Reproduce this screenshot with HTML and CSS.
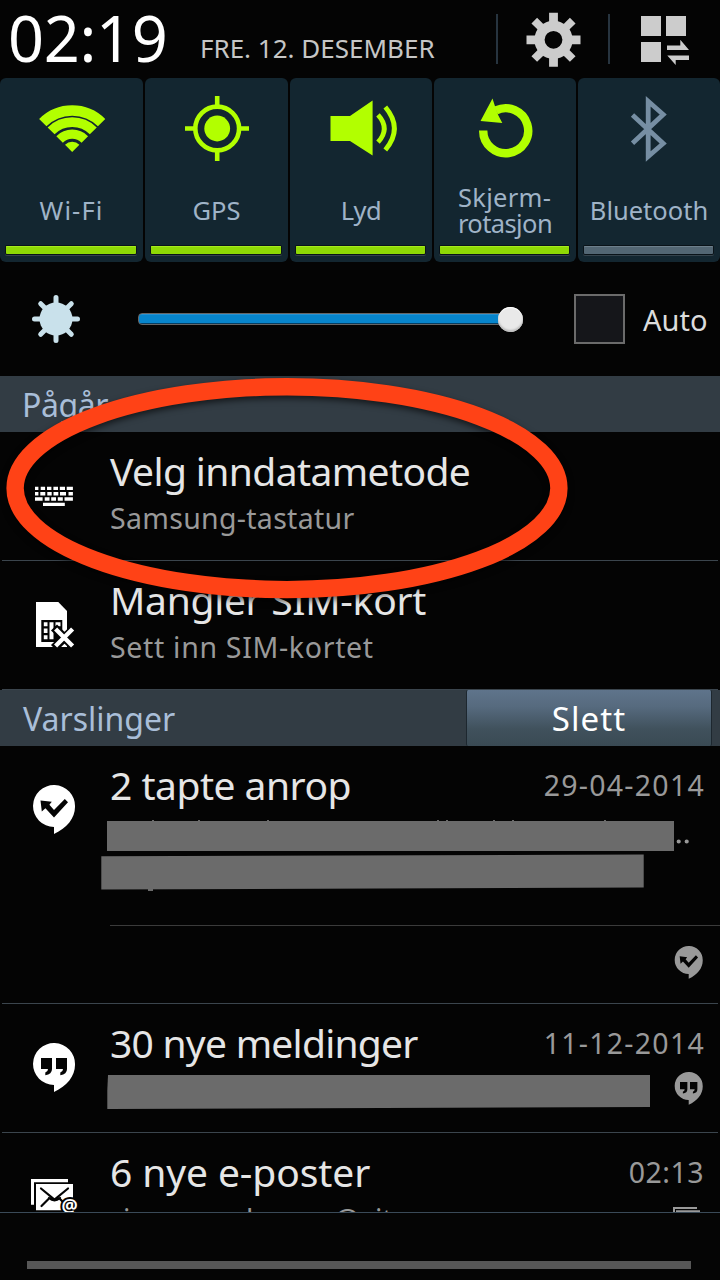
FILE: index.html
```html
<!DOCTYPE html>
<html lang="nb">
<head>
<meta charset="utf-8">
<title>Varslinger</title>
<link rel="stylesheet" href="styles.css">
</head>
<body>
<svg width="0" height="0" class="defs">
  <symbol id="missed" viewBox="-22 -22 44 50">
    <path fill="currentColor" d="M0 20V27C13 21 21 11 21 0A21 21 0 1 0 0 20Z"/>
    <path fill="#040404" d="M-13.5-6.5L-2.2-5.2L-4.6-2.2L0 3L10.8-8L14-4.8L0 10.5L-8.6 1.2L-12.2 4.6Z"/>
  </symbol>
  <symbol id="hangout" viewBox="-22 -22 44 50">
    <path fill="currentColor" d="M0 20V27C13 21 21 11 21 0A21 21 0 1 0 0 20Z"/>
    <path fill="#040404" d="M-13-7H-2V4Q-2 9.5-8.7 10.3V7.6Q-6 6.8-6 4H-13ZM2-7H13V4Q13 9.5 6.3 10.3V7.6Q9 6.8 9 4H2Z"/>
  </symbol>
</svg>
<main class="screen">
  <header class="status">
    <div class="clock">02:19</div>
    <div class="date">FRE. 12. DESEMBER</div>
    <div class="action gear">
      <svg width="110" height="50" viewBox="498 14 110 50" overflow="visible" fill="#ccc">
        <g transform="translate(553.5 39.8)">
          <circle r="14" fill="none" stroke="#ccc" stroke-width="10.2"/>
          <path d="M-4.4-27H4.4V-17H-4.4ZM-4.4 17H4.4V27H-4.4ZM-27-4.4V4.4H-17V-4.4ZM27-4.4V4.4H17V-4.4Z"/>
          <path transform="rotate(45)" d="M-4-27.2H4V-17H-4ZM-4 17H4V27.2H-4ZM-27.2-4V4H-17V-4ZM27.2-4V4H17V-4Z"/>
        </g>
      </svg>
    </div>
    <div class="action panels">
      <svg width="110" height="50" viewBox="610 14 110 50" overflow="visible" fill="#ccc">
        <path d="M641 16h20v20h-20zM666 16h20v20h-20zM641 42h20v20h-20zM667 45.5H680.3V39.7L689 50H667ZM689 55.5V60H675.7V65L667.3 55.5Z"/>
      </svg>
    </div>
  </header>

  <section class="toggles">
    <div class="toggle">
      <svg viewBox="0 78 143 100" fill="none" stroke="#b2ff00">
        <g transform="translate(72.2 152)">
          <path stroke-width="10.4" d="M-29.4-29.4A41.6 41.6 0 0 1 29.4-29.4"/>
          <path stroke-width="9.8" d="M-21.1-21.1A29.8 29.8 0 0 1 21.1-21.1"/>
          <path stroke-width="9.2" d="M-12.6-12.6A17.8 17.8 0 0 1 12.6-12.6"/>
          <path fill="#b2ff00" stroke="none" d="M0 0L-7.2-7.2A10.2 10.2 0 0 1 7.2-7.2Z"/>
        </g>
      </svg>
      <div class="label wifi">Wi-Fi</div><div class="bar"></div>
    </div>
    <div class="toggle">
      <svg viewBox="145 78 143 100" fill="none" stroke="#b2ff00">
        <circle cx="217.2" cy="128.5" r="21.9" stroke-width="4.6"/>
        <circle cx="217.2" cy="128.5" r="12.9" fill="#b2ff00" stroke="none"/>
        <path stroke-width="4.6" d="M217.2 96V106M217.2 151V161M185 128.5H195M239 128.5H249"/>
      </svg>
      <div class="label">GPS</div><div class="bar"></div>
    </div>
    <div class="toggle">
      <svg viewBox="290 78 142 100" fill="none" stroke="#b2ff00">
        <path fill="#b2ff00" stroke="none" d="M330.5 116H350L372.6 100.5V155.6L350 141H330.5Z"/>
        <path stroke-width="4.8" d="M378 114.8Q390.5 128.5 378 142.2M385.3 107Q403.5 128.5 385.3 150"/>
      </svg>
      <div class="label lyd">Lyd</div><div class="bar"></div>
    </div>
    <div class="toggle">
      <svg viewBox="434 78 142 100" fill="none" stroke="#b2ff00">
        <path stroke-width="8.4" d="M483.2 130.5A22.5 22.5 0 1 0 496 110.4"/>
        <path fill="#b2ff00" stroke="none" d="M492.5 98.5L480.5 121L502.3 122.9L498.4 115.4L495 106.2Z"/>
      </svg>
      <div class="label"><div><div class="upper">Skjerm-</div><div class="lower">rotasjon</div></div></div><div class="bar"></div>
    </div>
    <div class="toggle off">
      <svg viewBox="578 78 142 100" fill="none" stroke="#768ea3" stroke-width="4.8" stroke-miterlimit="8">
        <path d="M632.5 115L663.2 143.5L648.2 156.5V101.3L663.2 114.5L632.5 143.3"/>
      </svg>
      <div class="label">Bluetooth</div><div class="bar"></div>
    </div>
  </section>

  <section class="brightness">
    <svg class="sun" width="50" height="50" viewBox="-25 -25 50 50" stroke="#c9e1eb" stroke-width="5" stroke-linecap="round">
      <circle r="16.5" fill="#c9e1eb" stroke="none"/>
      <path d="M0-21.5V21.5M-21.5 0H21.5M-15.3-15.3L15.3 15.3M15.3-15.3L-15.3 15.3"/>
    </svg>
    <div class="track"><div class="knob"></div></div>
    <div class="check"></div>
    <div class="auto">Auto</div>
  </section>

  <h2 class="heading ongoing">Pågår</h2>
  <article class="item">
    <svg class="icon" viewBox="0 432 110 128" fill="#fff">
      <path d="M35 486.7h3.4v3.4H35zM40.7 486.7h4.4v3.4h-4.4zM47 486.7h4.4v3.4H47zM53.4 486.7h4.6v3.4h-4.6zM59.8 486.7h5.2v3.4h-5.2zM66.7 486.7h6.2v3.4h-6.2zM35 492h3.4v3.4H35zM40.3 492h5v3.4h-5zM47.3 492h4.4v3.4h-4.4zM53.5 492h4.8v3.4h-4.8zM60 492h6v3.4h-6zM68.5 492h4.4v3.4h-4.4zM35 497.3h7.6v3.4H35zM44.7 497.3h4.8v3.4h-4.8zM51.2 497.3h4.8v3.4h-4.8zM57.8 497.3h5v3.4h-5zM64.5 497.3h8.4v3.4h-8.4zM43 502.7h21.8v3.4H43z"/>
    </svg>
    <div class="body">
      <div class="title t1">Velg inndatametode</div>
      <div class="sub s1">Samsung-tastatur</div>
    </div>
  </article>
  <article class="item">
    <svg class="icon" viewBox="0 561 110 128">
      <path fill="#fff" d="M36 602H58.3L67 611V647H36Z"/>
      <path fill="#040404" d="M41.3 620H62.3V642H41.3Z"/>
      <path fill="#fff" d="M43.8 622.3h3.7v4h-3.7zM43.8 628.5h3.7v4.5h-3.7zM43.8 635.3h3.7v4h-3.7zM49.5 622.3h4v17h-4zM55.5 622.3h5v4h-5zM55.5 628.5h5v4.5h-5z"/>
      <path stroke="#040404" stroke-width="8.6" d="M54 627.5L75 648M75 627.5L54 648"/>
      <path stroke="#fff" stroke-width="4.4" d="M55.6 629L72.6 646M72.6 629L55.6 646"/>
    </svg>
    <div class="body">
      <div class="title t2">Mangler SIM-kort</div>
      <div class="sub s2">Sett inn SIM-kortet</div>
    </div>
  </article>

  <div class="heading notices"><h2>Varslinger</h2><button>Slett</button></div>
  <article class="item tall">
    <svg class="icon bubble"><use href="#missed"/></svg>
    <div class="body">
      <div class="line"><div class="title t3">2 tapte anrop</div><time>29-04-2014</time></div>
      <svg class="redacted" width="610" height="75" viewBox="100 817 610 75" fill="#6b6b6b">
        <path d="M107 821H674V851H107ZM101.3 856.3L643.7 854.5V887.5L101.3 889.5Z"/>
        <path d="M152 820h2v1h-2zM198 820h2v1h-2zM267 820h2v1h-2zM437 820h2v1h-2zM446 820h2v1h-2zM493 820h2v1h-2zM512 820h2v1h-2zM604 820h2v1h-2zM148 889h5v2h-5z"/>
        <path fill="#999" d="M676.6 841.5a2.1 2.1 0 1 0 4.2 0a2.1 2.1 0 1 0-4.2 0M684.6 841.5a2.1 2.1 0 1 0 4.2 0a2.1 2.1 0 1 0-4.2 0"/>
      </svg>
      <div class="extra"><svg class="mini"><use href="#missed"/></svg></div>
    </div>
  </article>
  <article class="item">
    <svg class="icon bubble"><use href="#hangout"/></svg>
    <div class="body">
      <div class="line"><div class="title t4">30 nye meldinger</div><time>11-12-2014</time></div>
      <div class="line">
        <svg class="redacted second" width="560" height="40" viewBox="100 1071 560 40" fill="#6b6b6b">
          <path d="M108 1075H650V1107L107.3 1109V1090Z"/>
        </svg>
        <svg class="mini"><use href="#hangout"/></svg>
      </div>
    </div>
  </article>
  <article class="item clipped">
    <svg class="icon" viewBox="0 1133 110 128">
      <path fill="#fff" d="M31 1179H68V1182.3H34V1204.7H31ZM36 1184H73V1210.3H36Z"/>
      <path fill="none" stroke="#040404" stroke-width="2.2" stroke-linecap="round" d="M41 1188.5L54.5 1199.5L68 1188.5M41.5 1206L48.5 1199M60 1199L63 1202M49 1198Q54.5 1202.5 60 1198"/>
      <text class="at" x="69.7" y="1211.5" text-anchor="middle">@</text>
    </svg>
    <div class="body">
      <div class="line"><div class="title t5">6 nye e-poster</div><time class="short">02:13</time></div>
      <div class="line peek">
        <span class="p1">i</span><span class="p2">l</span><span class="p3">@</span><span class="p4">it</span><span class="p5">6</span>
        <svg width="30" height="20" viewBox="673 1206 30 20" fill="#999"><path d="M673 1207H697V1209H675V1226H673ZM676 1210.3H700V1226H676Z"/></svg>
      </div>
    </div>
  </article>
  <footer class="handle"><div class="grip"></div></footer>

  <svg class="ring" width="600" height="250" viewBox="0 370 600 250">
    <ellipse cx="287" cy="488.2" rx="271.9" ry="101.4" fill="none" stroke="#ff4216" stroke-width="17.4"/>
  </svg>
</main>
</body>
</html>
```
FILE: styles.css
```css
* { box-sizing: border-box; }
body {
  margin: 0;
  background: #040404;
  font-family: "Noto Sans", "Open Sans", sans-serif;
}
.defs { position: absolute; }
.screen {
  position: relative;
  width: 720px;
  height: 1280px;
  overflow: hidden;
  display: flex;
  flex-direction: column;
}
svg { display: block; flex: none; }
h2 { margin: 0; font-weight: 400; }

.status { display: flex; height: 78px; flex: none; white-space: nowrap; }
.clock {
  width: 200px;
  padding-left: 8px;
  font-size: 63px;
  line-height: 75px;
  letter-spacing: -0.3px;
  color: #fff;
}
.date {
  width: 296px;
  font-size: 26px;
  line-height: 36px;
  padding-top: 30px;
  color: #c6c6c6;
}
.action { margin-top: 14px; height: 50px; border-left: 2px solid #27343f; }
.gear { width: 112px; }

.toggles {
  display: grid;
  grid-template-columns: 143px 143px 142px 142px 142px;
  gap: 2px;
  height: 184px;
  flex: none;
}
.toggle { background: #132630; border-radius: 6px; }
.toggle svg { width: 100%; height: 100px; }
.label {
  height: 64px;
  display: flex;
  align-items: center;
  justify-content: center;
  font-size: 25.5px;
  line-height: 26px;
  color: #9fb3c7;
}
.wifi { letter-spacing: 1.1px; }
.lyd { letter-spacing: -0.5px; }
.upper { letter-spacing: 0.3px; }
.lower { letter-spacing: -0.6px; }
.bar {
  margin: 4px 7px 0 6px;
  height: 8px;
  border-radius: 1px;
  background: #8fd905;
  box-shadow: 0 0 0 1px #0a1319, 0 1px 0 1px #34424b, inset 0 1px #a4ec1c;
}
.off .bar { background: #536673; box-shadow: 0 0 0 1px #0a1319, 0 1px 0 1px #34424b, inset 0 1px #6d7f8b; }

.brightness { display: flex; align-items: center; height: 114px; padding-left: 31px; flex: none; }
.track {
  width: 384px;
  height: 12px;
  margin-left: 57px;
  border: 1px solid #666;
  border-radius: 4px;
  background: linear-gradient(#2492d4 0 1px, #0785cc 1px 9px, #063d60 9px);
  display: flex;
  align-items: center;
  justify-content: flex-end;
}
.knob {
  width: 25px;
  height: 25px;
  margin-right: -2px;
  flex: none;
  border-radius: 50%;
  background: #e9e9e9;
  box-shadow: inset 0 -2px 2px #bbb, inset 0 1px 1px #fff;
}
.check { width: 51px; height: 50px; margin-left: 52px; border: 2px solid #6b6b6b; background: #15161a; }
.auto { margin: 2px 0 0 18px; font-size: 29px; line-height: 40px; color: #dcdcdc; }

.heading {
  height: 56px;
  flex: none;
  background: #323c44;
  color: #a9bed8;
  font-size: 32px;
  line-height: 58px;
}
.heading h2 { font-size: 32px; line-height: 58px; }
.ongoing { padding-left: 22px; letter-spacing: -0.4px; }
.notices { display: flex; justify-content: space-between; padding: 0 8px 0 23px; }
button {
  width: 246px;
  height: 56px;
  border: solid #1d272f;
  border-width: 0 1px;
  border-radius: 2px;
  padding: 0;
  background: linear-gradient(#5f748b, #566a7e 30%, #40515c 70%, #3a4a54);
  color: #fff;
  font: 33px/58px "Noto Sans", sans-serif;
  letter-spacing: 1.1px;
}

.item { display: flex; height: 129px; flex: none; position: relative; }
.item::after {
  content: "";
  position: absolute;
  left: 2px;
  right: 2px;
  bottom: 0;
  height: 1px;
  background: #3b454d;
}
.icon { width: 110px; height: 128px; }
.icon.bubble { width: 44px; height: 50px; margin: 39px 34px 0 32px; color: #fff; }
.body { width: 610px; padding-top: 15px; white-space: nowrap; }
.title { font-size: 39px; line-height: 48px; color: #e6e6e6; }
.t1 { letter-spacing: -0.6px; }
.t2 { letter-spacing: -0.3px; }
.t3 { letter-spacing: -0.5px; }
.t4 { letter-spacing: -0.75px; }
.t5 { letter-spacing: -0.1px; }
.sub { margin-top: 5px; font-size: 28.5px; line-height: 36px; color: #999; }
.s1 { letter-spacing: 0.3px; }
.s2 { letter-spacing: 0.68px; }
.line { display: flex; justify-content: space-between; padding-right: 16px; }
time { margin-right: -1px; font-size: 28.5px; line-height: 49px; height: 48px; letter-spacing: 1.25px; color: #999; }
.short { letter-spacing: 0.5px; margin-right: 0; }
.tall { height: 258px; }
.redacted { margin: 8px 0 0 -10px; }
.redacted.second { margin-top: 4px; }
.extra { border-top: 1px solid #3b3b3b; margin-top: 33px; padding: 20px 17px 0 0; display: flex; justify-content: flex-end; }
.mini { width: 29.4px; height: 33.4px; color: #999; }
.second + .mini { margin: 5px 1px 0 0; }
.clipped { height: 79px; overflow: hidden; }
.clipped::after { display: none; }
.at { font: 700 18px "Noto Sans", sans-serif; fill: #fff; stroke: #040404; stroke-width: 4px; paint-order: stroke; }
.peek { margin-top: 5px; justify-content: flex-start; padding: 0; font-size: 28.5px; line-height: 36px; color: #999; }
.peek span { flex: none; }
.p1 { width: 123px; padding-left: 13px; }
.p2 { width: 101px; padding-left: 13px; }
.p3 { width: 41px; }
.p4 { width: 269px; }
.p5 { width: 29px; margin-top: 3px; }
.peek svg { margin-top: 5px; }

.handle { flex: 1; border-top: 1px solid #3a4a58; background: #050505; padding: 48px 29px 0 27px; }
.grip { height: 8px; background: #575757; }

.ring { position: absolute; left: 0; top: 370px; filter: drop-shadow(0 3px 3px rgba(0, 0, 0, .6)); }
```
